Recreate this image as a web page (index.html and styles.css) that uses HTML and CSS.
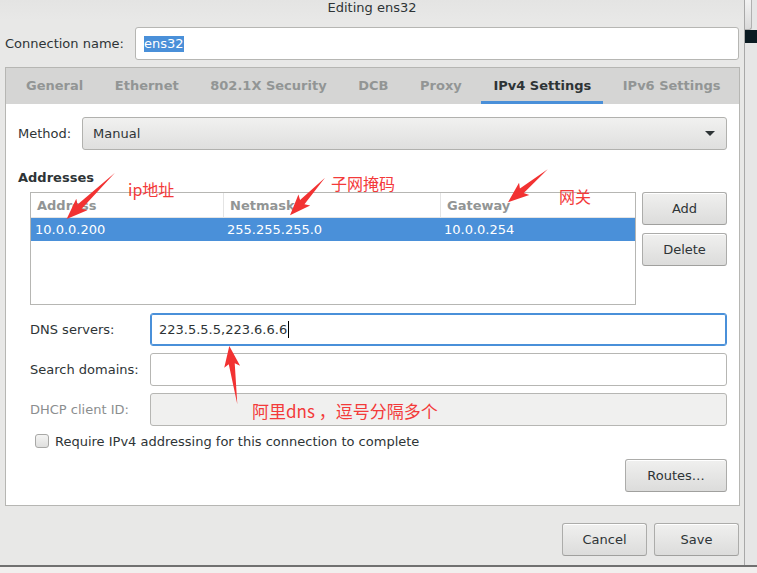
FILE: index.html
```html
<!DOCTYPE html>
<html lang="en">
<head>
    <meta charset="UTF-8">
    <title>Editing ens32</title>
    <link rel="stylesheet" href="styles.css">
</head>
<body>

<div class="screen">
    <div class="dialog">
        <div class="titlebar">Editing ens32</div>

        <div class="name-row">
            <span class="name-label">Connection name:</span>
            <div class="entry name-entry"><span class="sel">ens32</span></div>
        </div>

        <div class="notebook">
            <div class="tabs">
                <span class="tab">General</span>
                <span class="tab">Ethernet</span>
                <span class="tab">802.1X Security</span>
                <span class="tab">DCB</span>
                <span class="tab">Proxy</span>
                <span class="tab active">IPv4 Settings</span>
                <span class="tab">IPv6 Settings</span>
            </div>

            <div class="page">
                <div class="method-row">
                    <span class="method-label">Method:</span>
                    <div class="combo"><span>Manual</span><span class="arrow"></span></div>
                </div>

                <div class="section-title">Addresses</div>
                <div class="addresses">
                    <div class="table">
                        <div class="thead">
                            <span>Address</span>
                            <span>Netmask</span>
                            <span>Gateway</span>
                        </div>
                        <div class="trow selected">
                            <span>10.0.0.200</span>
                            <span>255.255.255.0</span>
                            <span>10.0.0.254</span>
                        </div>
                    </div>
                    <div class="side-buttons">
                        <button class="btn">Add</button>
                        <button class="btn">Delete</button>
                    </div>
                </div>

                <div class="fields">
                    <div class="field">
                        <span class="field-label">DNS servers:</span>
                        <div class="entry focus">223.5.5.5,223.6.6.6<span class="caret"></span></div>
                    </div>
                    <div class="field">
                        <span class="field-label">Search domains:</span>
                        <div class="entry"></div>
                    </div>
                    <div class="field">
                        <span class="field-label disabled">DHCP client ID:</span>
                        <div class="entry off"></div>
                    </div>
                </div>

                <div class="check-row"><span class="checkbox"></span>Require IPv4 addressing for this connection to complete</div>

                <div class="routes-row"><button class="btn routes">Routes…</button></div>
            </div>
        </div>

        <div class="actions">
            <button class="btn action">Cancel</button>
            <button class="btn action">Save</button>
        </div>
    </div>
    <div class="edge">
        <div class="edge-top"></div>
        <div class="edge-dark"></div>
    </div>
</div>
<div class="taskbar"></div>

<div class="notes">
    <svg class="arrows" width="757" height="573" viewBox="0 0 757 573">
        <polygon transform="translate(115 172.7) rotate(136.2)" points="0,0 49,-3 46,-8 67,0 46,8 49,3"/>
        <polygon transform="translate(325 177.7) rotate(132.9)" points="0,0 33.4,-3 30.4,-8 51.4,0 30.4,8 33.4,3"/>
        <polygon transform="translate(547.7 169.3) rotate(140.3)" points="0,0 33.6,-3 30.6,-8 51.6,0 30.6,8 33.6,3"/>
        <polygon transform="translate(237.3 404.3) rotate(-97.8)" points="0,0 40.9,-3 37.9,-8 58.9,0 37.9,8 40.9,3"/>
    </svg>
    <span class="note note-ip">ip地址</span>
    <span class="note note-mask">子网掩码</span>
    <span class="note note-gw">网关</span>
    <span class="note note-dns">阿里dns ，逗号分隔多个</span>
</div>

</body>
</html>
```

FILE: styles.css
```css
body { margin: 0; width: 757px; height: 573px; overflow: hidden; position: relative; background: #e8e8e7; font-family: "DejaVu Sans", sans-serif; font-size: 13px; color: #2e3436; }
.screen { display: flex; height: 565px; }
.dialog { width: 745px; box-sizing: border-box; border-right: 1px solid #a8a8a8; display: flex; flex-direction: column; }
.titlebar { height: 20px; line-height: 16px; text-align: center; background: linear-gradient(#e4e4e3, #e8e8e7); }

.name-row { display: flex; align-items: center; height: 33px; margin-top: 7px; padding: 0 5px; }
.name-label { width: 130px; }
.entry { flex: 1; height: 100%; box-sizing: border-box; background: #fff; border: 1px solid #b6b6b3; border-radius: 3px; display: flex; align-items: center; padding-left: 8px; line-height: 16px; }
.sel { background: #4a90d9; color: #fff; }
.entry.focus { border-color: #4a90d9; box-shadow: inset 0 0 0 1px #4a90d9; }
.entry.off { background: #f0f0ef; }
.caret { display: inline-block; width: 1px; height: 17px; background: #000; margin-left: 1px; }

.notebook { margin: 7px 4px 0 5px; border: 1px solid #b6b6b3; }
.tabs { display: flex; gap: 7.6px; height: 36px; padding-left: 8px; background: #d5d5d4; }
.tab { display: flex; align-items: center; padding: 1px 12px 0; border-bottom: 3px solid transparent; font-weight: bold; color: #929595; }
.tab.active { color: #2e3436; border-bottom-color: #4a90d9; }

.page { background: #fff; padding: 13px 12px 13px 12px; }
.method-row { display: flex; align-items: center; height: 33px; }
.method-label { width: 64px; }
.combo { flex: 1; height: 100%; box-sizing: border-box; display: flex; align-items: center; justify-content: space-between; padding: 0 11px 0 10px; border: 1px solid #b1b1ae; border-radius: 3px; background: linear-gradient(#f1f1f0, #dfdfde); }
.arrow { width: 0; height: 0; border-left: 5px solid transparent; border-right: 5px solid transparent; border-top: 5px solid #2e3436; }

.section-title { margin-top: 20px; line-height: 16px; font-weight: bold; }
.addresses { display: flex; gap: 6px; margin: 6px 0 0 12px; }
.table { width: 606px; height: 113px; box-sizing: border-box; border: 1px solid #b6b6b3; background: #fff; }
.thead, .trow { display: grid; grid-template-columns: 192px 217px 1fr; }
.thead { height: 25px; box-sizing: border-box; border-bottom: 1px solid #e4e4e4; font-weight: bold; color: #929595; }
.thead span { display: flex; align-items: center; padding-left: 6px; }
.thead span + span { border-left: 1px solid #e4e4e4; }
.trow { height: 23px; }
.trow span { display: flex; align-items: center; padding-left: 4px; }
.trow.selected { background: #4a90d9; color: #fff; }

.side-buttons { display: flex; flex-direction: column; gap: 8px; width: 85px; }
.btn { font-family: inherit; font-size: 13px; color: #2e3436; height: 33px; box-sizing: border-box; border: 1px solid #acacaa; border-bottom-color: #a0a09e; border-radius: 3px; background: linear-gradient(#f0f0ef, #dcdcdb); box-shadow: inset 0 1px #fff; padding: 0; }

.fields { display: flex; flex-direction: column; gap: 7px; margin: 8px 0 0 12px; }
.field { display: flex; align-items: center; height: 33px; }
.field-label { width: 120px; }
.field-label.disabled { color: #8b8e8f; }

.check-row { display: flex; align-items: center; gap: 6px; margin: 8px 0 0 17px; height: 14px; }
.checkbox { width: 14px; height: 14px; box-sizing: border-box; border: 1px solid #a8a8a6; border-radius: 3px; background: linear-gradient(#f4f4f3, #dfdfde); }

.routes-row { display: flex; justify-content: flex-end; margin-top: 11px; }
.routes { width: 102px; }

.actions { display: flex; justify-content: flex-end; gap: 7px; margin-top: 17px; padding-right: 5px; }
.action { width: 85px; }

.edge { flex: 1; background: #e6e6e6; }
.edge-top { height: 30px; width: 7px; box-sizing: border-box; border-right: 1px solid #b0b0b0; border-bottom: 1px solid #b0b0b0; border-radius: 0 0 3px 0; background: linear-gradient(#f2f2f2, #dadada); }
.edge-dark { height: 13px; background: #0b1b22; }

.taskbar { height: 8px; box-sizing: border-box; border-top: 2px solid #707070; background: #f1efee; }

.notes { position: absolute; top: 0; left: 0; width: 757px; height: 573px; pointer-events: none; }
.arrows { position: absolute; top: 0; left: 0; }
.arrows polygon { fill: #f23232; }
.note { position: absolute; font-family: "Noto Sans CJK SC", "DejaVu Sans", sans-serif; font-size: 16px; line-height: 18px; color: #f33a3a; white-space: nowrap; }
.note-ip { left: 128px; top: 180px; }
.note-mask { left: 331px; top: 174px; }
.note-gw { left: 559px; top: 187px; }
.note-dns { left: 252px; top: 402px; font-size: 17px; }
```
